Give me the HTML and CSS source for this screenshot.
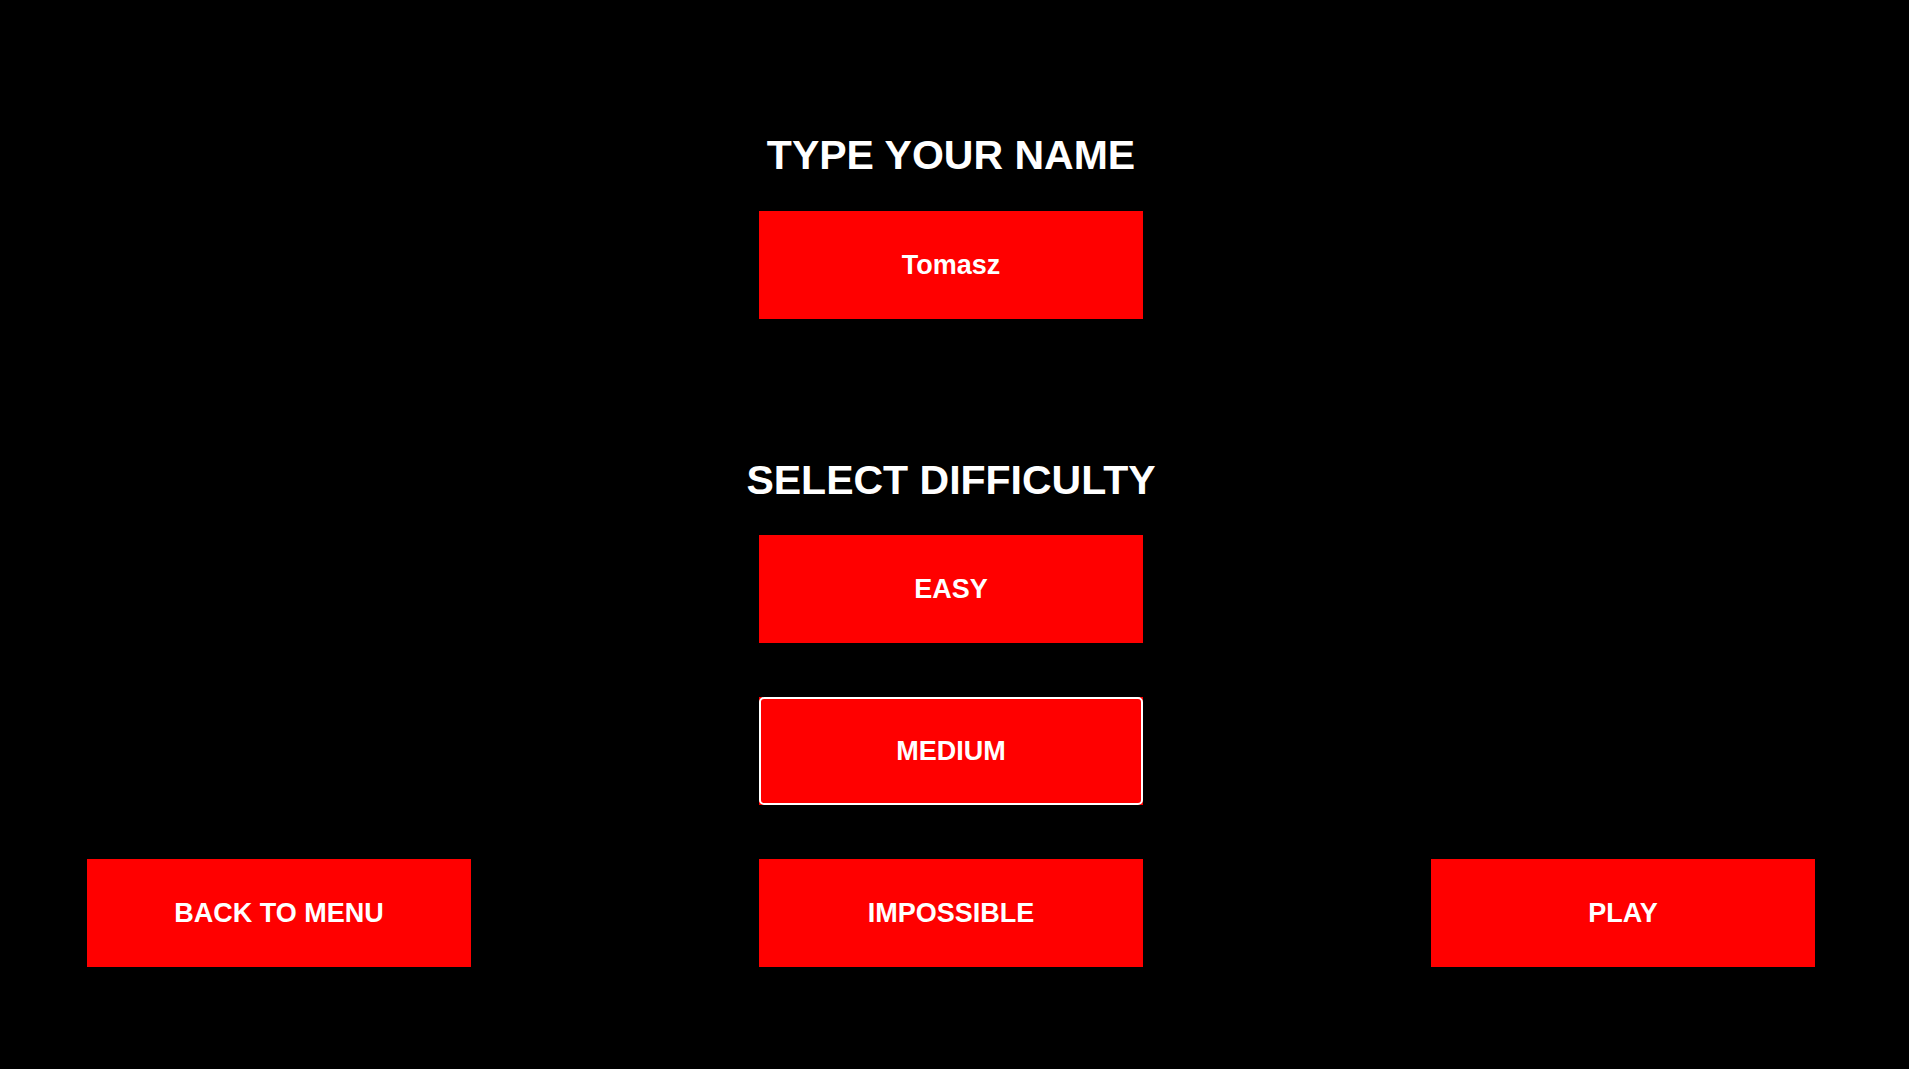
FILE: index.html
```html
<!DOCTYPE html>
<html lang="en">
<head>
<meta charset="utf-8">
<title>Game setup</title>
<link rel="stylesheet" href="styles.css">
</head>
<body>
<div class="screen">
  <h1 class="title title-name">TYPE YOUR NAME</h1>
  <div class="btn name-box">Tomasz</div>
  <h1 class="title title-diff">SELECT DIFFICULTY</h1>
  <div class="btn btn-easy">EASY</div>
  <div class="btn btn-medium selected">MEDIUM</div>
  <div class="btn btn-back">BACK TO MENU</div>
  <div class="btn btn-impossible">IMPOSSIBLE</div>
  <div class="btn btn-play">PLAY</div>
</div>
</body>
</html>
```
FILE: styles.css
```css
html, body {
  margin: 0;
  padding: 0;
  background: #000;
}
body {
  width: 1909px;
  height: 1069px;
  overflow: hidden;
  font-family: "Liberation Sans", Arial, sans-serif;
  color: #fff;
}
.screen {
  display: grid;
  grid-template-columns: 384px 384px 384px;
  column-gap: 288px;
  padding: 135px 0 0 87px;
}
.title {
  grid-column: 2;
  margin: 0;
  font-size: 41px;
  line-height: 41px;
  font-weight: 700;
  text-align: center;
  white-space: nowrap;
  justify-self: center;
}
.title-name {
  margin-bottom: 35px;
}
.title-diff {
  margin-top: 141px;
  margin-bottom: 34px;
}
.btn {
  height: 108px;
  background: #ff0000;
  color: #fff;
  font-size: 27px;
  font-weight: 700;
  display: flex;
  align-items: center;
  justify-content: center;
  position: relative;
}
.name-box,
.btn-easy,
.btn-medium {
  grid-column: 2;
}
.btn-medium {
  margin-top: 54px;
}
.selected::after {
  content: "";
  position: absolute;
  inset: 0;
  border: 2px solid #fff;
  border-radius: 5px;
}
.btn-back {
  grid-column: 1;
  margin-top: 54px;
}
.btn-impossible {
  grid-column: 2;
  margin-top: 54px;
}
.btn-play {
  grid-column: 3;
  margin-top: 54px;
}
```
